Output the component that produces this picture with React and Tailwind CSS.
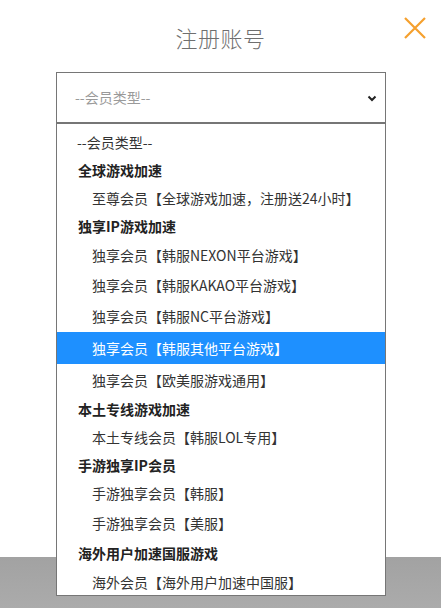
import React from "react";

const rows = [
  { t: "--会员类型--", kind: "ph", h: "h-[28px]" },
  { t: "全球游戏加速", kind: "g", h: "h-[28px]" },
  { t: "至尊会员【全球游戏加速，注册送24小时】", kind: "o", h: "h-[28px]" },
  { t: "独享IP游戏加速", kind: "g", h: "h-[28px]" },
  { t: "独享会员【韩服NEXON平台游戏】", kind: "o", h: "h-[29px]" },
  { t: "独享会员【韩服KAKAO平台游戏】", kind: "o", h: "h-[31px]" },
  { t: "独享会员【韩服NC平台游戏】", kind: "o", h: "h-[32px]" },
  { t: "独享会员【韩服其他平台游戏】", kind: "sel", h: "h-[32px]" },
  { t: "独享会员【欧美服游戏通用】", kind: "o", h: "h-[31px]" },
  { t: "本土专线游戏加速", kind: "g", h: "h-[28px]" },
  { t: "本土专线会员【韩服LOL专用】", kind: "o", h: "h-[28px]" },
  { t: "手游独享IP会员", kind: "g", h: "h-[27px]" },
  { t: "手游独享会员【韩服】", kind: "o", h: "h-[29px]" },
  { t: "手游独享会员【美服】", kind: "o", h: "h-[31px]" },
  { t: "海外用户加速国服游戏", kind: "g", h: "h-[30px]" },
  { t: "海外会员【海外用户加速中国服】", kind: "o", h: "h-[27px]" },
];

function Row({ r }) {
  const base = `flex items-center ${r.h} text-[14px] leading-none whitespace-nowrap`;
  if (r.kind === "ph") return <div className={`${base} pl-[20px] text-[#333]`}>{r.t}</div>;
  if (r.kind === "g") return <div className={`${base} pl-[21px] font-bold text-[#222]`}>{r.t}</div>;
  if (r.kind === "sel")
    return <div className={`${base} pl-[35px] bg-[#1e90ff] text-white`}>{r.t}</div>;
  return <div className={`${base} pl-[35px] text-[#333]`}>{r.t}</div>;
}

export default function App() {
  return (
    <div
      className="relative w-[441px] h-[608px] overflow-hidden flex flex-col bg-white"
      style={{ fontFamily: '"Microsoft YaHei", "Noto Sans CJK SC", "Noto Sans", sans-serif' }}
    >
      <div className="h-[557px] bg-white flex flex-col">
        <div className="h-[74px] flex items-center justify-center">
          <h1 className="text-[22px] text-[#6f6f6f] font-light tracking-[0.5px]">注册账号</h1>
        </div>
        <div className="ml-[56px] w-[330px] h-[51px] -mt-[2px] border border-[#767676] bg-white flex items-center pl-[18px] pr-[6px]">
          <span className="flex-1 text-[14px] text-[#9a9a9a]">--会员类型--</span>
          <svg width="12" height="12" viewBox="0 0 12 12" className="mr-[1px]">
            <path d="M2.5 4.5 L6 8 L9.5 4.5" fill="none" stroke="#222" strokeWidth="2" />
          </svg>
        </div>
      </div>
      <div className="flex-1 bg-gradient-to-b from-[#a2a2a2] to-[#ababab]" />

      <button className="absolute top-[16px] left-[403px] w-[24px] h-[24px] flex items-center justify-center">
        <svg width="24" height="24" viewBox="0 0 24 24">
          <path d="M2 2 L22 22 M22 2 L2 22" stroke="#f5a02e" strokeWidth="2.2" fill="none" />
        </svg>
      </button>

      <div className="absolute top-[123px] left-[56px] w-[330px] h-[473px] border border-[#767676] bg-white pt-[4px] flex flex-col">
        {rows.map((r, i) => (
          <Row key={i} r={r} />
        ))}
      </div>
    </div>
  );
}
